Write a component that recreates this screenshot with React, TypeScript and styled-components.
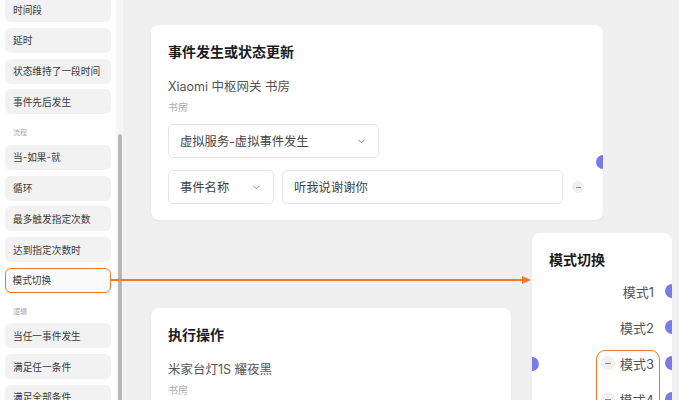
import React from 'react';
import styled, { createGlobalStyle } from 'styled-components';

const GlobalStyle = createGlobalStyle`
  html, body {
    margin: 0;
    padding: 0;
    background: #f0f0f0;
  }
  body {
    font-family: "Inter", "Noto Sans CJK SC", sans-serif;
  }
`;

const Page = styled.div`
  position: relative;
  display: flex;
  width: 679px;
  height: 400px;
  overflow: hidden;
`;

const Sidebar = styled.aside`
  display: flex;
  width: 123px;
  flex-shrink: 0;
  background: #ffffff;
`;

const List = styled.div`
  display: flex;
  flex-direction: column;
  gap: 5.75px;
  width: 116px;
  box-sizing: border-box;
  padding: 0 5px;
  margin-top: -3px;
`;

const Item = styled.div<{ $active?: boolean }>`
  display: flex;
  align-items: center;
  flex-shrink: 0;
  height: 25px;
  box-sizing: border-box;
  border-radius: 6px;
  font-size: 9.7px;
  color: #3a3a3a;
  background: ${(p) => (p.$active ? '#fafafa' : '#f2f2f2')};
  border: ${(p) => (p.$active ? '1.5px solid #e9792d' : 'none')};
  padding-left: ${(p) => (p.$active ? '6.5px' : '8px')};
`;

const SectionLabel = styled.div`
  flex-shrink: 0;
  height: 12px;
  margin-top: 7px;
  padding-left: 8px;
  font-size: 7px;
  line-height: 12px;
  color: #aaaaaa;
`;

const ScrollTrack = styled.div`
  width: 7px;
  padding-top: 134px;
  box-sizing: border-box;
  background: #f7f7f7;
  display: flex;
  justify-content: center;
`;

const ScrollThumb = styled.div`
  width: 4px;
  height: 100%;
  border-radius: 2px 2px 0 0;
  background: #b7b7b7;
`;

const Canvas = styled.main`
  position: relative;
  flex: 1;
  background: #f0f0f0;
`;

const Node = styled.section<{ $x: number; $y: number; $w: number }>`
  position: absolute;
  left: ${(p) => p.$x}px;
  top: ${(p) => p.$y}px;
  width: ${(p) => p.$w}px;
  box-sizing: border-box;
  padding: 17px 17px 16px;
  background: #ffffff;
  border-radius: 8px;
  box-shadow: 0 1px 3px rgba(0, 0, 0, 0.04);
  overflow: hidden;
`;

const NodeTitle = styled.h3`
  margin: 0;
  font-size: 14px;
  line-height: 20px;
  font-weight: 600;
  color: #1c1c1c;
`;

const DeviceName = styled.div`
  margin-top: 16px;
  font-size: 12.5px;
  line-height: 18px;
  color: #555555;
`;

const RoomName = styled.div`
  margin-top: 4px;
  font-size: 10px;
  line-height: 14px;
  color: #ababab;
`;

const FieldRow = styled.div<{ $top: number }>`
  display: flex;
  align-items: center;
  gap: 8px;
  margin-top: ${(p) => p.$top}px;
`;

const Field = styled.div<{ $w: number }>`
  display: flex;
  align-items: center;
  justify-content: space-between;
  width: ${(p) => p.$w}px;
  height: 34px;
  box-sizing: border-box;
  padding: 0 12px 0 11px;
  border: 1px solid #e6e6e6;
  border-radius: 5px;
  font-size: 12.3px;
  color: #444444;
  background: #ffffff;
`;

const Chevron = styled.svg`
  width: 9px;
  height: 9px;
  color: #8a8a8a;
`;

const MinusButton = styled.div<{ $size: number }>`
  display: flex;
  align-items: center;
  justify-content: center;
  width: ${(p) => p.$size}px;
  height: ${(p) => p.$size}px;
  border-radius: 50%;
  background: #f0f0f0;
  flex-shrink: 0;
  &::before {
    content: '';
    width: ${(p) => Math.round(p.$size * 0.45)}px;
    height: 1px;
    background: #8a8a8a;
  }
`;

const Port = styled.span<{ $side: 'left' | 'right'; $top: number }>`
  position: absolute;
  ${(p) => p.$side}: -7px;
  top: ${(p) => p.$top}px;
  width: 14px;
  height: 14px;
  border-radius: 50%;
  background: #7b7be6;
`;

const ModeList = styled.div`
  margin-top: 3px;
  display: flex;
  flex-direction: column;
`;

const ModeRow = styled.div`
  position: relative;
  display: flex;
  align-items: center;
  justify-content: flex-end;
  gap: 5px;
  height: 36px;
  font-size: 13px;
  color: #555555;
  margin-right: 1px;
`;

const ModePort = styled.span`
  position: absolute;
  right: -25px;
  top: 11px;
  width: 14px;
  height: 14px;
  border-radius: 50%;
  background: #7b7be6;
`;

const Highlight = styled.div`
  position: absolute;
  left: 64px;
  top: 117px;
  width: 64px;
  height: 120px;
  box-sizing: border-box;
  border: 1.5px solid #e9792d;
  border-radius: 9px;
  pointer-events: none;
`;

const Overlay = styled.svg`
  position: absolute;
  left: 0;
  top: 0;
  width: 679px;
  height: 400px;
  pointer-events: none;
`;

const ChevronIcon = () => (
  <Chevron viewBox="0 0 10 10" fill="none">
    <path d="M2 3.5L5 6.5L8 3.5" stroke="currentColor" strokeWidth="1.1" strokeLinecap="round" strokeLinejoin="round" />
  </Chevron>
);

const sections: { label?: string; items: string[] }[] = [
  { items: ['时间段', '延时', '状态维持了一段时间', '事件先后发生'] },
  { label: '流程', items: ['当-如果-就', '循环', '最多触发指定次数', '达到指定次数时', '模式切换'] },
  { label: '逻辑', items: ['当任一事件发生', '满足任一条件', '满足全部条件'] },
];

const modes = [
  { name: '模式1', removable: false },
  { name: '模式2', removable: false },
  { name: '模式3', removable: true },
  { name: '模式4', removable: true },
];

export default function App() {
  return (
    <>
      <GlobalStyle />
      <Page>
        <Sidebar>
          <List>
            {sections.map((s, i) => (
              <React.Fragment key={i}>
                {s.label && <SectionLabel>{s.label}</SectionLabel>}
                {s.items.map((it) => (
                  <Item key={it} $active={it === '模式切换'}>
                    {it}
                  </Item>
                ))}
              </React.Fragment>
            ))}
          </List>
          <ScrollTrack>
            <ScrollThumb />
          </ScrollTrack>
        </Sidebar>
        <Canvas>
          <Node $x={28} $y={25} $w={452}>
            <NodeTitle>事件发生或状态更新</NodeTitle>
            <DeviceName>Xiaomi 中枢网关 书房</DeviceName>
            <RoomName>书房</RoomName>
            <FieldRow $top={10}>
              <Field $w={211}>
                <span>虚拟服务-虚拟事件发生</span>
                <ChevronIcon />
              </Field>
            </FieldRow>
            <FieldRow $top={12}>
              <Field $w={106}>
                <span>事件名称</span>
                <ChevronIcon />
              </Field>
              <Field $w={281}>
                <span>听我说谢谢你</span>
              </Field>
              <MinusButton $size={12} style={{ marginLeft: 1 }} />
            </FieldRow>
            <Port $side="right" $top={130} />
          </Node>

          <Node $x={28} $y={308} $w={360}>
            <NodeTitle>执行操作</NodeTitle>
            <DeviceName>米家台灯1S 耀夜黑</DeviceName>
            <RoomName>书房</RoomName>
          </Node>

          <Node $x={409} $y={233} $w={140}>
            <NodeTitle>模式切换</NodeTitle>
            <ModeList>
              {modes.map((m) => (
                <ModeRow key={m.name}>
                  {m.removable && <MinusButton $size={14} />}
                  <span>{m.name}</span>
                  <ModePort />
                </ModeRow>
              ))}
            </ModeList>
            <Port $side="left" $top={124} />
            <Highlight />
          </Node>
        </Canvas>
        <Overlay viewBox="0 0 679 400">
          <line x1="110" y1="280" x2="524" y2="280" stroke="#ec7a2c" strokeWidth="1.8" />
          <path d="M522 276 L531 280 L522 284 Z" fill="#ec7a2c" />
        </Overlay>
      </Page>
    </>
  );
}
